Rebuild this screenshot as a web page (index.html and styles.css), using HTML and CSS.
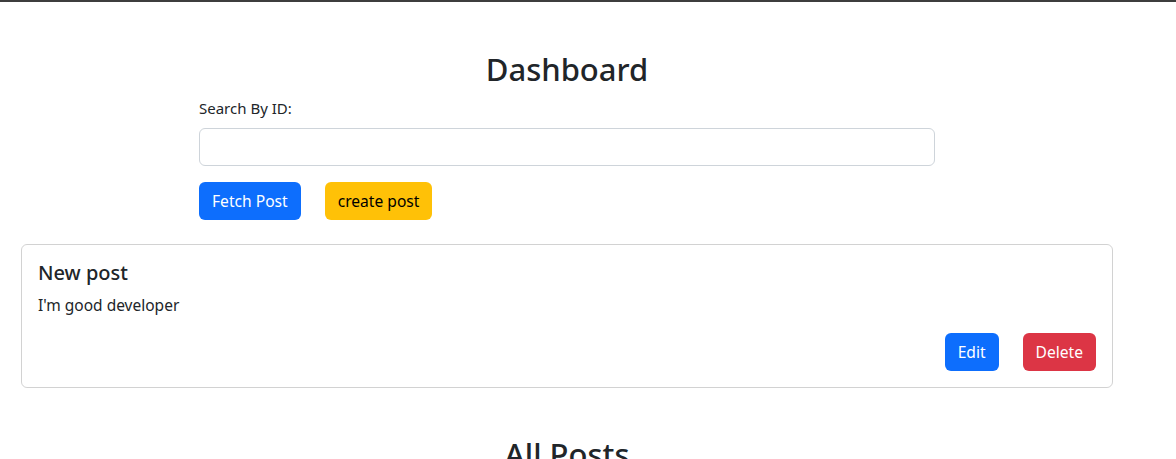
FILE: index.html
```html
<!DOCTYPE html>
<html lang="en">
<head>
<meta charset="utf-8">
<title>Dashboard</title>
<link rel="stylesheet" href="styles.css">
</head>
<body>
<div class="topline"></div>
<main class="page">
  <h2 class="title">Dashboard</h2>
  <div class="search">
    <label class="label" for="pid">Search By ID:</label>
    <input class="input" id="pid" type="text">
    <div class="actions">
      <button class="btn btn-primary">Fetch Post</button>
      <button class="btn btn-warning">create post</button>
    </div>
  </div>
  <div class="card">
    <h5 class="card-title">New post</h5>
    <p class="card-text">I'm good developer</p>
    <div class="card-actions">
      <button class="btn btn-primary">Edit</button>
      <button class="btn btn-danger">Delete</button>
    </div>
  </div>
  <h2 class="title all">All Posts</h2>
</main>
</body>
</html>
```
FILE: styles.css
```css
* { box-sizing: border-box; }
html, body { margin: 0; padding: 0; }
body {
  font-family: "Noto Sans", "Open Sans", sans-serif;
  font-size: 16px;
  line-height: 1.5;
  color: #212529;
  background: #fff;
  overflow: hidden;
  height: 459px;
}
.topline { height: 2px; background: #3d3d3d; }
.page {
  width: 1092px;
  margin-left: 21px;
  padding-top: 49px;
}
.title {
  font-size: 31px;
  font-weight: 500;
  line-height: 1.2;
  text-align: center;
  margin: 0 0 8px;
}
.search {
  width: 736px;
  margin: 0 auto;
}
.label { display: block; font-size: 15px; line-height: 24px; margin-bottom: 8px; }
.input {
  display: block;
  width: 100%;
  height: 38px;
  border: 1px solid #ced4da;
  border-radius: 6px;
  padding: 6px 12px;
  font: inherit;
}
.actions { display: flex; gap: 24px; margin-top: 16px; }
.btn {
  font-family: inherit;
  font-size: 15.6px;
  line-height: 24px;
  padding: 6px 12px;
  border: 1px solid transparent;
  border-radius: 6px;
  height: 38px;
  cursor: pointer;
}
.btn-primary { background: #0d6efd; color: #fff; }
.btn-warning { background: #ffc107; color: #000; }
.btn-danger { background: #dc3545; color: #fff; }
.card {
  margin-top: 24px;
  border: 1px solid rgba(0,0,0,.175);
  border-radius: 6px;
  padding: 16px;
}
.card-title { font-size: 20px; font-weight: 500; line-height: 24px; margin: 0 0 8px; }
.card-text { margin: 0 0 16px; font-size: 15.5px; line-height: 24px; }
.card-actions { display: flex; justify-content: flex-end; gap: 24px; }
.all { margin-top: 48px; }
```
